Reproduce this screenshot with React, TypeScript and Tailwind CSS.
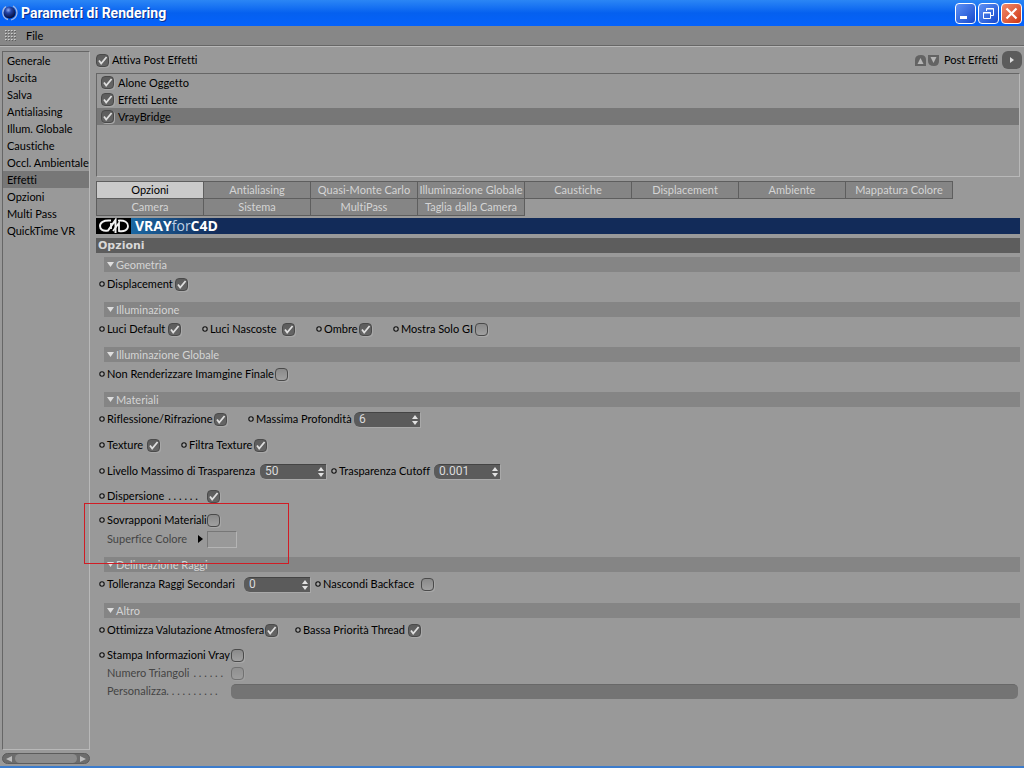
import React, { useId, useState } from "react";

const sidebarItems = [
  "Generale", "Uscita", "Salva", "Antialiasing", "Illum. Globale", "Caustiche",
  "Occl. Ambientale", "Effetti", "Opzioni", "Multi Pass", "QuickTime VR",
];

const tabs = [
  "Opzioni", "Antialiasing", "Quasi-Monte Carlo", "Illuminazione Globale", "Caustiche",
  "Displacement", "Ambiente", "Mappatura Colore", "Camera", "Sistema", "MultiPass", "Taglia dalla Camera",
];

function Check({ id, checked = false, disabled = false }: { id: string; checked?: boolean; disabled?: boolean }) {
  return (
    <span className={`grid size-[13px] shrink-0 ${disabled ? "opacity-50" : ""}`}>
      <input
        id={id}
        type="checkbox"
        defaultChecked={checked}
        disabled={disabled}
        className="peer col-start-1 row-start-1 size-[13px] appearance-none rounded-[4px] border border-[#4a4a4a] bg-linear-to-b from-[#8a8a8a] to-[#a0a0a0] shadow-[1px_1px_0_#a8a8a8] checked:from-[#5c5c5c] checked:to-[#666666]"
      />
      <svg viewBox="0 0 13 13" className="pointer-events-none invisible col-start-1 row-start-1 size-[13px] peer-checked:visible">
        <path d="M3 6.5 L5.2 9.6 L10.6 3" fill="none" stroke="#dedede" strokeWidth="1.8" />
      </svg>
    </span>
  );
}

function Bullet() {
  return (
    <svg viewBox="0 0 6 6" className="mr-[2px] size-[6px] shrink-0">
      <circle cx="3" cy="3" r="2.2" fill="#a5a5a5" stroke="#111" strokeWidth="1.1" />
    </svg>
  );
}

type FieldProps = {
  label: string;
  labelWidth: string;
  gap?: string;
  checked?: boolean;
  value?: string;
  dots?: string;
  disabled?: boolean;
};

function Field({ label, labelWidth, gap = "", checked, value, dots, disabled }: FieldProps) {
  const id = useId();
  return (
    <div className={`flex items-center ${gap}`}>
      {disabled ? <span className="w-2" /> : <Bullet />}
      <label htmlFor={id} className={`flex shrink-0 pb-px whitespace-nowrap ${labelWidth} ${disabled ? "text-[#444]" : ""}`}>
        {label}
        {dots && <span aria-hidden="true" className="ml-1">{dots}</span>}
      </label>
      {value !== undefined ? <Spinner id={id} value={value} /> : <Check id={id} checked={checked} disabled={disabled} />}
    </div>
  );
}

function Spinner({ id, value }: { id: string; value: string }) {
  return (
    <span className="flex h-[15px] w-[66px] shrink-0 items-center rounded-l-[6px] border-t border-[#444] bg-[#5b5b5b] shadow-[1px_1px_0_#a9a9a9]">
      <input id={id} defaultValue={value} className="h-[14px] w-0 min-w-0 flex-1 bg-transparent pb-px pl-[5px] font-[Roboto,'Liberation_Sans',sans-serif] text-[12px] text-[#dadada] outline-none" />
      <button type="button" aria-label="Cambia valore" className="mr-[2px] flex h-[13px] w-[6px] items-center">
        <svg viewBox="0 0 6 10" className="h-[10px] w-[6px]">
          <path d="M3 0 L6 4 H0 Z M0 6 H6 L3 10 Z" fill="#e2e2e2" />
        </svg>
      </button>
    </span>
  );
}

function Section({ title, children }: { title: string; children: React.ReactNode }) {
  return (
    <section>
      <h2 className="ml-2 flex h-[15px] items-center bg-[#858585] pl-[3px] text-[#d4d4d4]">
        <svg viewBox="0 0 7 5" className="mr-[2px] h-[5px] w-[7px]">
          <path d="M0 0 H7 L3.5 5 Z" fill="#dedede" />
        </svg>
        {title}
      </h2>
      {children}
    </section>
  );
}

function Row({ height = "h-6", children }: { height?: string; children: React.ReactNode }) {
  return <div className={`flex items-center pl-[3px] ${height}`}>{children}</div>;
}

function TitleBar() {
  const button = "grid size-[21px] place-items-center rounded-[4px] border border-white";
  return (
    <header className="flex h-[26px] items-center bg-linear-to-b from-[#2b86f5] via-[#0560ef] to-[#0562fb] pr-[2px] pl-[2px]">
      <svg viewBox="0 0 16 16" className="size-4">
        <defs>
          <radialGradient id="ball" cx="0.4" cy="0.3" r="0.7">
            <stop offset="0" stopColor="#8cacf4" />
            <stop offset="0.35" stopColor="#2445a8" />
            <stop offset="1" stopColor="#050c38" />
          </radialGradient>
        </defs>
        <circle cx="7.5" cy="7.5" r="6" fill="url(#ball)" />
        <path d="M4 1.5 C-1 5 0 13 6 14.5 M11 1 C17 5 16 13 9 15" fill="none" stroke="#a9b9df" strokeWidth="1.3" />
      </svg>
      <h1 className="ml-[3px] flex-1 font-[Roboto,'Noto_Sans',sans-serif] text-[14px] font-bold text-white [text-shadow:1px_1px_0_#0a2d87]">
        Parametri di Rendering
      </h1>
      <div className="flex gap-[2px]">
        <button type="button" aria-label="Riduci a icona" className={`${button} bg-linear-to-br from-[#5f91f5] to-[#1747cc]`}>
          <svg viewBox="0 0 19 19" className="size-[19px]"><path d="M4 12 H11 V15 H4 Z" fill="white" /></svg>
        </button>
        <button type="button" aria-label="Ripristina" className={`${button} bg-linear-to-br from-[#5f91f5] to-[#1747cc]`}>
          <svg viewBox="0 0 19 19" className="size-[19px]" fill="none" stroke="white">
            <path d="M7.5 7 V4.5 H14.5 V11.5 H12 M7 5 H15" />
            <path d="M4.5 8.5 H11.5 V14.5 H4.5 Z M4 9 H12" />
          </svg>
        </button>
        <button type="button" aria-label="Chiudi" className={`${button} bg-linear-to-br from-[#f0896a] to-[#cf3308]`}>
          <svg viewBox="0 0 19 19" className="size-[19px]"><path d="M4.5 4.5 L14.5 14.5 M14.5 4.5 L4.5 14.5" stroke="white" strokeWidth="2.2" /></svg>
        </button>
      </div>
    </header>
  );
}

function MenuBar() {
  return (
    <nav className="flex h-5 items-center border-b border-[#666] bg-[#878787] pl-[5px] shadow-[0_1px_0_#b8b8b8]">
      <svg viewBox="0 0 12 12" className="size-3">
        {[0, 3, 6, 9].map((y) =>
          [0, 3, 6, 9].map((x) => (
            <g key={`${x}-${y}`}>
              <rect x={x + 1} y={y + 1} width="1" height="1" fill="#5d5d5d" />
              <rect x={x} y={y} width="1" height="1" fill="#d0d0d0" />
              <rect x={x + 1} y={y} width="1" height="1" fill="#b0b0b0" />
            </g>
          )),
        )}
      </svg>
      <button type="button" className="ml-[9px]">File</button>
    </nav>
  );
}

function Sidebar() {
  const [selected, setSelected] = useState("Effetti");
  return (
    <aside className="flex w-[88px] shrink-0 flex-col">
      <ul className="flex-1 border border-[#666] border-r-[#b8b8b8] border-b-[#b8b8b8]">
        {sidebarItems.map((item) => (
          <li key={item}>
            <button
              type="button"
              onClick={() => setSelected(item)}
              className={`block h-[17px] w-full pb-px pl-1 text-left whitespace-nowrap ${item === selected ? "bg-[#777]" : ""}`}
            >
              {item}
            </button>
          </li>
        ))}
      </ul>
      <div className="mt-[3px] flex h-[11px] items-center justify-between rounded-full border border-[#5c5c5c] bg-[#6c6c6c]">
        <button type="button" aria-label="Scorri a sinistra" className="grid h-[9px] w-3 place-items-center">
          <svg viewBox="0 0 6 6" className="size-[6px]"><path d="M6 0 V6 L0 3 Z" fill="#bcbcbc" /></svg>
        </button>
        <span className="h-[9px] flex-1 rounded-full bg-[#8c8c8c]" />
        <button type="button" aria-label="Scorri a destra" className="grid h-[9px] w-3 place-items-center">
          <svg viewBox="0 0 6 6" className="size-[6px]"><path d="M0 0 V6 L6 3 Z" fill="#bcbcbc" /></svg>
        </button>
      </div>
    </aside>
  );
}

function EffectsList() {
  const effects = [
    { id: "fx-alone", name: "Alone Oggetto" },
    { id: "fx-lente", name: "Effetti Lente" },
    { id: "fx-vray", name: "VrayBridge", selected: true },
  ];
  return (
    <>
      <div className="flex h-[22px] items-center pb-1">
        <Check id="post" checked />
        <label htmlFor="post" className="ml-[3px] flex-1 pb-px">Attiva Post Effetti</label>
        <button type="button" aria-label="Sposta su">
          <svg viewBox="0 0 11 11" className="size-[11px]">
            <path d="M0 11 V5 Q0 0 6 0 Q11 0 11 5 V11 Z" fill="#636363" />
            <path d="M5.5 3 L8.5 9 H2.5 Z" fill="#b5b5b5" />
          </svg>
        </button>
        <button type="button" aria-label="Sposta giù" className="ml-[2px]">
          <svg viewBox="0 0 11 11" className="size-[11px]">
            <path d="M0 0 H11 V6 Q11 11 6 11 Q0 11 0 6 Z" fill="#636363" />
            <path d="M2.5 2 H8.5 L5.5 8 Z" fill="#b5b5b5" />
          </svg>
        </button>
        <span className="ml-[5px] pb-px">Post Effetti</span>
        <button type="button" aria-label="Menu post effetti" className="-mr-[2px] ml-1 grid h-[18px] w-5 place-items-center rounded-[6px] bg-[#5c5c5c]">
          <svg viewBox="0 0 4 6" className="h-[6px] w-1"><path d="M0 0 V6 L4 3 Z" fill="#ddd" /></svg>
        </button>
      </div>
      <ul className="h-[104px] border border-[#666] border-r-[#b8b8b8] border-b-[#b8b8b8]">
        {effects.map((fx) => (
          <li key={fx.id} className={`flex h-[17px] items-center pl-1 ${fx.selected ? "bg-[#777]" : ""}`}>
            <Check id={fx.id} checked />
            <label htmlFor={fx.id} className="ml-[4px]">{fx.name}</label>
          </li>
        ))}
      </ul>
    </>
  );
}

function Tabs() {
  const [active, setActive] = useState("Opzioni");
  return (
    <div role="tablist" className="mt-1 flex max-w-[858px] flex-wrap pt-px pl-px">
      {tabs.map((tab) => (
        <button
          key={tab}
          type="button"
          role="tab"
          aria-selected={tab === active}
          onClick={() => setActive(tab)}
          className={`-mt-px -ml-px h-[18px] w-[108px] border border-[#5e5e5e] pb-px text-center whitespace-nowrap ${tab === active ? "bg-[#cacaca] text-black" : "bg-[#858585] text-[#d4d4d4]"}`}
        >
          {tab}
        </button>
      ))}
    </div>
  );
}

function Banner() {
  return (
    <div className="mt-[2px] flex h-4 items-center bg-[#122b59]">
      <span className="flex h-4 w-[35px] items-center justify-center bg-black">
        <svg viewBox="0 0 32 16" className="h-4 w-8" fill="none" stroke="#f2f2f2">
          <path d="M13 2.6 C5 2 2 4.5 2 8 C2 11.5 5 13.5 10 12.6 L17.5 2 V15" strokeWidth="2" />
          <path d="M20 2.6 C27 2 30 4.5 30 8 C30 12 26 14 21 13 V5 L15 13 M13 5 V11" strokeWidth="1.8" />
        </svg>
      </span>
      <span className="flex h-4 items-center bg-linear-to-r from-[#1a68a3] to-[#122b59] pl-[4px] font-['Open_Sans','Noto_Sans',sans-serif] text-[14px] leading-4 text-white">
        <b>VRAY</b><span className="text-[#bfd0e4]">for</span><b>C4D</b>
      </span>
    </div>
  );
}

export default function App() {
  return (
    <div className="flex min-h-screen flex-col border-b-2 border-[#3c7ccc] bg-[#999] font-[Lato,'Liberation_Sans',sans-serif] text-[11px] leading-[15px] text-black [font-variant-ligatures:none]">
      <TitleBar />
      <MenuBar />
      <div className="flex flex-1 gap-[6px] pt-[5px] pr-1 pb-[2px] pl-[2px]">
        <Sidebar />
        <main className="relative min-w-0 flex-1">
          <EffectsList />
          <Tabs />
          <Banner />
          <h2 className="mt-1 mb-1 h-[15px] bg-[#5d5d5d] pl-[2px] font-['DejaVu_Sans',sans-serif] text-[11px] font-bold text-[#d8d8d8]">Opzioni</h2>

          <Section title="Geometria">
            <Row><Field label="Displacement" labelWidth="w-[68px]" checked /></Row>
          </Section>
          <div className="h-[6px]" />
          <Section title="Illuminazione">
            <Row>
              <Field label="Luci Default" labelWidth="w-[61px]" checked />
              <Field label="Luci Nascoste" labelWidth="w-[72px]" gap="ml-[21px]" checked />
              <Field label="Ombre" labelWidth="w-[35px]" gap="ml-[21px]" checked />
              <Field label="Mostra Solo GI" labelWidth="w-[74px]" gap="ml-[21px]" />
            </Row>
          </Section>
          <div className="h-[6px]" />
          <Section title="Illuminazione Globale">
            <Row><Field label="Non Renderizzare Imamgine Finale" labelWidth="w-[168px]" /></Row>
          </Section>
          <div className="h-[6px]" />
          <Section title="Materiali">
            <Row>
              <Field label="Riflessione/Rifrazione" labelWidth="w-[107px]" checked />
              <Field label="Massima Profondità" labelWidth="w-[98px]" gap="ml-[21px]" value="6" />
            </Row>
            <Row height="h-7">
              <Field label="Texture" labelWidth="w-[40px]" checked />
              <Field label="Filtra Texture" labelWidth="w-[65px]" gap="ml-[21px]" checked />
            </Row>
            <Row>
              <Field label="Livello Massimo di Trasparenza" labelWidth="w-[153px]" value="50" />
              <Field label="Trasparenza Cutoff" labelWidth="w-[95px]" gap="ml-[5px]" value="0.001" />
            </Row>
            <Row height="h-[26px]"><Field label="Dispersione" labelWidth="w-[100px]" dots=". . . . . ." checked /></Row>
            <Row height="h-[22px]"><Field label="Sovrapponi Materiali" labelWidth="w-[100px]" /></Row>
            <Row height="h-4">
              <span className="ml-2 w-[91px] pb-px whitespace-nowrap text-[#444]">Superfice Colore</span>
              <button type="button" aria-label="Espandi colore" className="mr-1">
                <svg viewBox="0 0 5 8" className="h-2 w-[5px]"><path d="M0 0 V8 L5 4 Z" fill="black" /></svg>
              </button>
              <button type="button" aria-label="Superfice Colore" className="h-[17px] w-[30px] shrink-0 border border-[#777] border-r-[#b4b4b4] border-b-[#b4b4b4]" />
            </Row>
          </Section>
          <div className="h-[10px]" />
          <Section title="Delineazione Raggi">
            <Row>
              <Field label="Tolleranza Raggi Secondari" labelWidth="w-[137px]" value="0" />
              <Field label="Nascondi Backface" labelWidth="w-[98px]" gap="ml-[5px]" />
            </Row>
          </Section>
          <div className="h-[7px]" />
          <Section title="Altro">
            <Row>
              <Field label="Ottimizza Valutazione Atmosfera" labelWidth="w-[158px]" checked />
              <Field label="Bassa Priorità Thread" labelWidth="w-[105px]" gap="ml-[17px]" checked />
            </Row>
            <Row height="h-[26px]"><Field label="Stampa Informazioni Vray" labelWidth="w-[124px]" /></Row>
            <Row height="h-[10px]"><Field label="Numero Triangoli" labelWidth="w-[124px]" dots=". . . . . ." disabled /></Row>
            <Row height="h-[26px]">
              <label htmlFor="custom" className="ml-2 flex w-[124px] shrink-0 pb-px whitespace-nowrap text-[#444]">
                Personalizza<span aria-hidden="true">. . . . . . . . . .</span>
              </label>
              <input id="custom" disabled className="mr-[2px] h-[15px] min-w-0 flex-1 rounded-[5px] border-t border-[#686868] bg-[#747474] px-1" />
            </Row>
          </Section>

          <div className="pointer-events-none absolute top-[452px] -left-3 h-[61px] w-[205px] border border-[#d01c24]" />
        </main>
      </div>
    </div>
  );
}
